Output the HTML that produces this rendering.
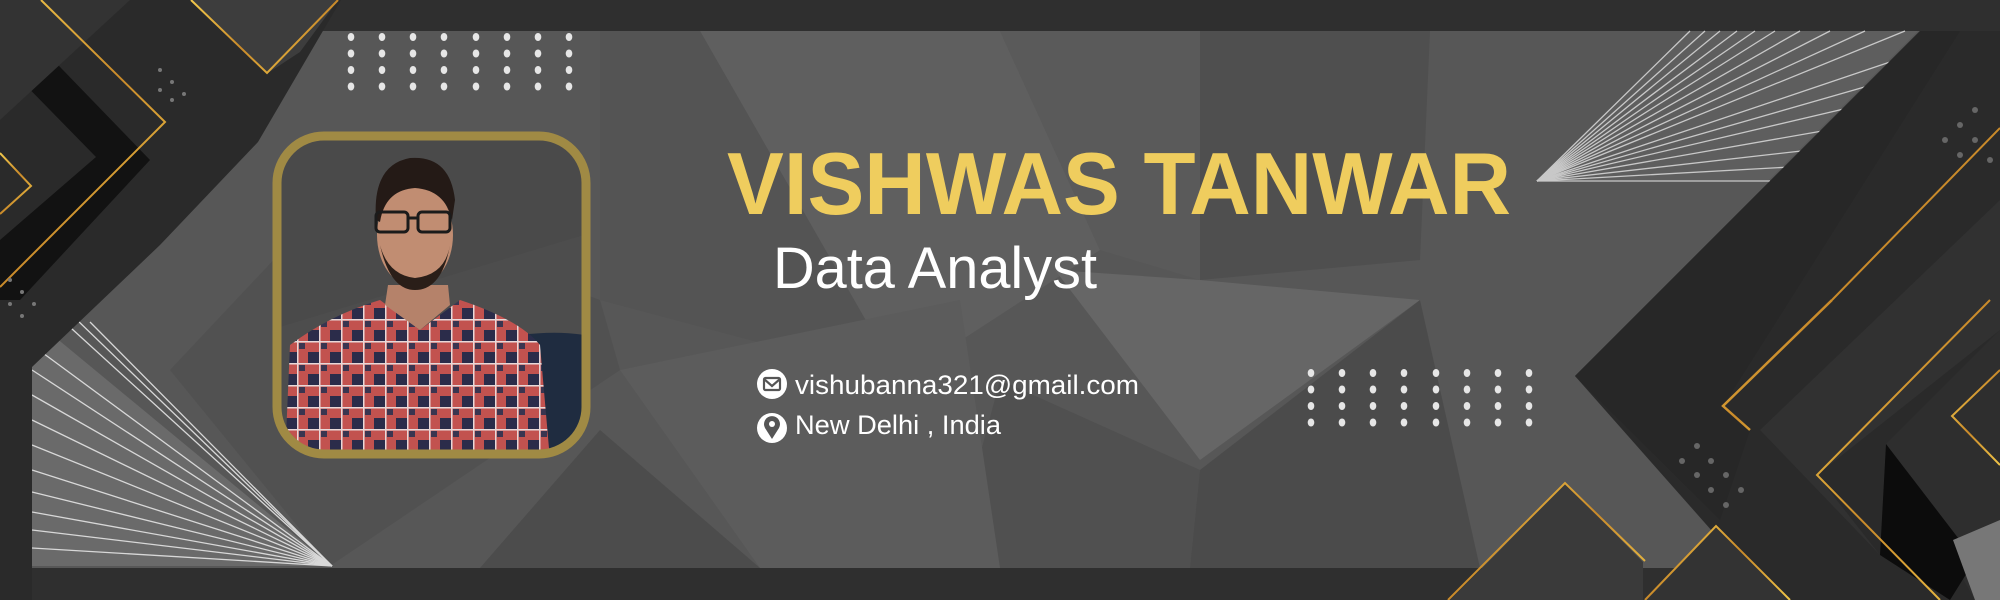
<!DOCTYPE html>
<html><head><meta charset="utf-8"><style>
html,body{margin:0;padding:0;background:#2f2f2f}
svg{display:block}
</style></head><body>
<svg width="2000" height="600" viewBox="0 0 2000 600" xmlns="http://www.w3.org/2000/svg" font-family="Liberation Sans, sans-serif">
<defs>
<linearGradient id="gold" x1="0" y1="0" x2="1" y2="1">
<stop offset="0" stop-color="#f2c94c"/><stop offset="0.5" stop-color="#c98a2a"/><stop offset="1" stop-color="#f0c548"/>
</linearGradient>
<pattern id="plaid" width="22" height="22" patternUnits="userSpaceOnUse">
<rect width="22" height="22" fill="#c2524f"/>
<rect x="0" y="0" width="11" height="11" fill="#2b2c4a"/>
<rect x="13" y="13" width="6" height="6" fill="#3a3550"/>
<rect x="11" y="0" width="1.5" height="22" fill="#e8d8d8"/>
<rect x="0" y="11" width="22" height="1.5" fill="#e8d8d8"/>
</pattern>
<clipPath id="ph"><rect x="281" y="140" width="301" height="310" rx="44"/></clipPath>
</defs>
<rect width="2000" height="600" fill="#2f2f2f"/>
<!-- main panel -->
<rect x="32" y="31" width="1900" height="537" fill="#575757"/>
<polygon points="700,31 1000,31 1100,250 900,380" fill="#5f5f5f"/>
<polygon points="1000,31 1200,31 1200,280 1100,250" fill="#5a5a5a"/>
<polygon points="1200,31 1430,31 1420,260 1200,280" fill="#4f4f4f"/>
<polygon points="1055,270 1200,280 1420,300 1200,460" fill="#666"/>
<polygon points="1000,380 1200,470 1190,568 950,568" fill="#505050"/>
<polygon points="600,31 700,31 900,380 600,300" fill="#545454"/>
<polygon points="620,370 960,300 1000,568 760,568" fill="#5c5c5c"/>
<polygon points="1200,470 1420,300 1480,568 1190,568" fill="#4b4b4b"/>
<polygon points="600,430 760,568 480,568" fill="#4c4c4c"/>
<polygon points="170,370 330,200 600,300 620,370 330,566" fill="#515151"/>
<!-- top-right fan -->
<polygon points="1537,181 1690,31 1918,31 1768,181" fill="#5e5e5e"/>
<g stroke="#c8c8c8" stroke-width="1.3" fill="none">
<line x1="1537" y1="181" x2="1690" y2="31"/><line x1="1537" y1="181" x2="1705" y2="31"/><line x1="1537" y1="181" x2="1720" y2="31"/><line x1="1537" y1="181" x2="1737" y2="31"/><line x1="1537" y1="181" x2="1755" y2="31"/><line x1="1537" y1="181" x2="1775" y2="31"/><line x1="1537" y1="181" x2="1800" y2="31"/><line x1="1537" y1="181" x2="1830" y2="31"/><line x1="1537" y1="181" x2="1865" y2="31"/><line x1="1537" y1="181" x2="1905" y2="31"/>
<line x1="1537" y1="181" x2="1890" y2="62"/><line x1="1537" y1="181" x2="1868" y2="86"/><line x1="1537" y1="181" x2="1848" y2="108"/><line x1="1537" y1="181" x2="1828" y2="130"/><line x1="1537" y1="181" x2="1810" y2="150"/><line x1="1537" y1="181" x2="1790" y2="167"/><line x1="1537" y1="181" x2="1770" y2="181"/>
</g>
<!-- left fan -->
<polygon points="32,318 32,566 332,566" fill="#6a6a6a"/>
<g stroke="#d8d8d8" stroke-width="1.3" fill="none">
<line x1="60" y1="318" x2="332" y2="566"/><line x1="75" y1="318" x2="332" y2="566"/><line x1="90" y1="322" x2="332" y2="566"/>
<line x1="32" y1="345" x2="332" y2="566"/><line x1="32" y1="370" x2="332" y2="566"/><line x1="32" y1="395" x2="332" y2="566"/><line x1="32" y1="420" x2="332" y2="566"/><line x1="32" y1="445" x2="332" y2="566"/><line x1="32" y1="470" x2="332" y2="566"/><line x1="32" y1="492" x2="332" y2="566"/><line x1="32" y1="512" x2="332" y2="566"/><line x1="32" y1="530" x2="332" y2="566"/><line x1="32" y1="548" x2="332" y2="566"/>
</g>
<!-- left dark shapes -->
<polygon points="0,0 341,0 258,142 160,245 32,367 32,600 0,600" fill="#2a2a2a"/>
<polygon points="191,0 338,0 300,52 268,73" fill="#3d3d3d"/>
<polygon points="6,65 32,38 150,160 20,300 0,300 0,240 96,157" fill="#121212"/>
<polygon points="0,0 130,0 0,120" fill="#333"/>
<polyline points="41,0 165,122 0,287" fill="none" stroke="url(#gold)" stroke-width="2"/>
<polyline points="0,153 31,186 0,214" fill="none" stroke="url(#gold)" stroke-width="2"/>
<polyline points="191,0 267,73 338,0" fill="none" stroke="url(#gold)" stroke-width="2"/>
<g fill="#777"><circle cx="160" cy="70" r="2"/><circle cx="172" cy="82" r="2"/><circle cx="184" cy="94" r="2"/><circle cx="160" cy="90" r="2"/><circle cx="172" cy="100" r="2"/><circle cx="10" cy="280" r="2"/><circle cx="22" cy="292" r="2"/><circle cx="10" cy="304" r="2"/><circle cx="34" cy="304" r="2"/><circle cx="22" cy="316" r="2"/></g>
<!-- right dark shapes -->
<polygon points="1920,31 2000,31 2000,600 1773,600 1575,376" fill="#2a2a2a"/>
<polygon points="1575,376 1920,31 1960,31 1723,406 1750,430 1720,520" fill="#272727"/>
<polygon points="1760,430 2000,200 2000,330 1817,475 1880,555" fill="#313131"/>
<polygon points="1886,444 2000,330 2000,600 1975,600" fill="#2e2e2e"/>
<polygon points="1886,444 1975,560 1950,600 1880,555" fill="#0c0c0c"/>
<polygon points="1953,540 2000,520 2000,600 1975,600" fill="#777"/>
<polygon points="1500,550 1565,483 1643,562 1643,600 1450,600" fill="#3a3a3a"/>
<polygon points="1643,600 1716,526 1790,600" fill="#333"/>
<polyline points="1990,300 1817,475 1940,600" fill="none" stroke="url(#gold)" stroke-width="2"/>
<polyline points="1832,300 1723,406 1750,430" fill="none" stroke="url(#gold)" stroke-width="2.5"/>
<line x1="1832" y1="300" x2="2000" y2="128" stroke="url(#gold)" stroke-width="2"/>
<polyline points="2000,370 1952,416 2000,465" fill="none" stroke="url(#gold)" stroke-width="2"/>
<polyline points="1448,600 1565,483 1645,561" fill="none" stroke="url(#gold)" stroke-width="2"/>
<polyline points="1645,600 1716,526 1790,600" fill="none" stroke="url(#gold)" stroke-width="2"/>
<g fill="#666"><circle cx="1697" cy="446" r="3"/><circle cx="1682" cy="461" r="3"/><circle cx="1711" cy="461" r="3"/><circle cx="1697" cy="475" r="3"/><circle cx="1726" cy="475" r="3"/><circle cx="1711" cy="490" r="3"/><circle cx="1741" cy="490" r="3"/><circle cx="1726" cy="505" r="3"/><circle cx="1975" cy="110" r="3"/><circle cx="1960" cy="125" r="3"/><circle cx="1975" cy="140" r="3"/><circle cx="1960" cy="155" r="3"/><circle cx="1945" cy="140" r="3"/><circle cx="1990" cy="160" r="3"/></g>
<!-- dot grids -->
<g fill="#e6e6e6">
<g id="dg"><ellipse cx="351" cy="37" rx="3.3" ry="4"/><ellipse cx="382" cy="37" rx="3.3" ry="4"/><ellipse cx="413" cy="37" rx="3.3" ry="4"/><ellipse cx="444" cy="37" rx="3.3" ry="4"/><ellipse cx="476" cy="37" rx="3.3" ry="4"/><ellipse cx="507" cy="37" rx="3.3" ry="4"/><ellipse cx="538" cy="37" rx="3.3" ry="4"/><ellipse cx="569" cy="37" rx="3.3" ry="4"/></g>
<use href="#dg" y="16.5"/><use href="#dg" y="33"/><use href="#dg" y="49.5"/>
<use href="#dg" x="960" y="336"/><use href="#dg" x="960" y="352.5"/><use href="#dg" x="960" y="369"/><use href="#dg" x="960" y="385.5"/>
</g>
<!-- photo -->
<g clip-path="url(#ph)">
<rect x="270" y="130" width="330" height="330" fill="#4a4a4a"/>
<polygon points="270,330 600,230 600,460 270,460" fill="#4d4d4d"/>
<path d="M520 335 Q560 330 590 336 L590 460 L530 460 Z" fill="#1f2c40"/>
<path d="M285 460 L290 345 Q330 315 380 300 L420 330 L460 300 Q520 320 540 345 L550 460 Z" fill="url(#plaid)"/>
<path d="M388 285 L448 285 L450 305 L420 330 L385 305 Z" fill="#b5826a"/>
<ellipse cx="415" cy="235" rx="38" ry="52" fill="#c18d72"/>
<path d="M380 245 Q390 290 415 290 Q442 290 450 245 Q445 275 415 278 Q388 275 380 245Z" fill="#2a1e18"/>
<path d="M376 220 Q372 165 410 158 Q450 155 455 200 L452 220 Q445 190 415 188 Q385 190 380 222Z" fill="#241a16"/>
<rect x="376" y="212" width="32" height="20" rx="4" fill="none" stroke="#1b1b1b" stroke-width="3"/>
<rect x="418" y="212" width="32" height="20" rx="4" fill="none" stroke="#1b1b1b" stroke-width="3"/>
<line x1="408" y1="218" x2="418" y2="218" stroke="#1b1b1b" stroke-width="3"/>
</g>
<rect x="277" y="136" width="309" height="318" rx="47" fill="none" stroke="#a08a44" stroke-width="9"/>
<!-- text -->
<text x="727" y="214" font-size="88" font-weight="bold" fill="#efcd5e" textLength="784" lengthAdjust="spacingAndGlyphs">VISHWAS TANWAR</text>
<text x="773" y="288" font-size="58" fill="#ffffff" textLength="324" lengthAdjust="spacingAndGlyphs">Data Analyst</text>
<text x="795" y="394" font-size="27" fill="#ffffff" textLength="344" lengthAdjust="spacingAndGlyphs">vishubanna321@gmail.com</text>
<text x="795" y="434" font-size="27" fill="#ffffff" textLength="206" lengthAdjust="spacingAndGlyphs">New Delhi , India</text>
<!-- icons -->
<circle cx="772" cy="384" r="15" fill="#fff"/>
<rect x="764" y="378" width="16" height="12" rx="1.5" fill="none" stroke="#555" stroke-width="2.2"/>
<polyline points="764,379 772,386 780,379" fill="none" stroke="#555" stroke-width="2.2"/>
<circle cx="772" cy="428" r="15" fill="#fff"/>
<path d="M772 439 L765 428 A8 8 0 1 1 779 428 Z" fill="#555"/>
<circle cx="772" cy="424" r="3" fill="#fff"/>
</svg>
</body></html>
